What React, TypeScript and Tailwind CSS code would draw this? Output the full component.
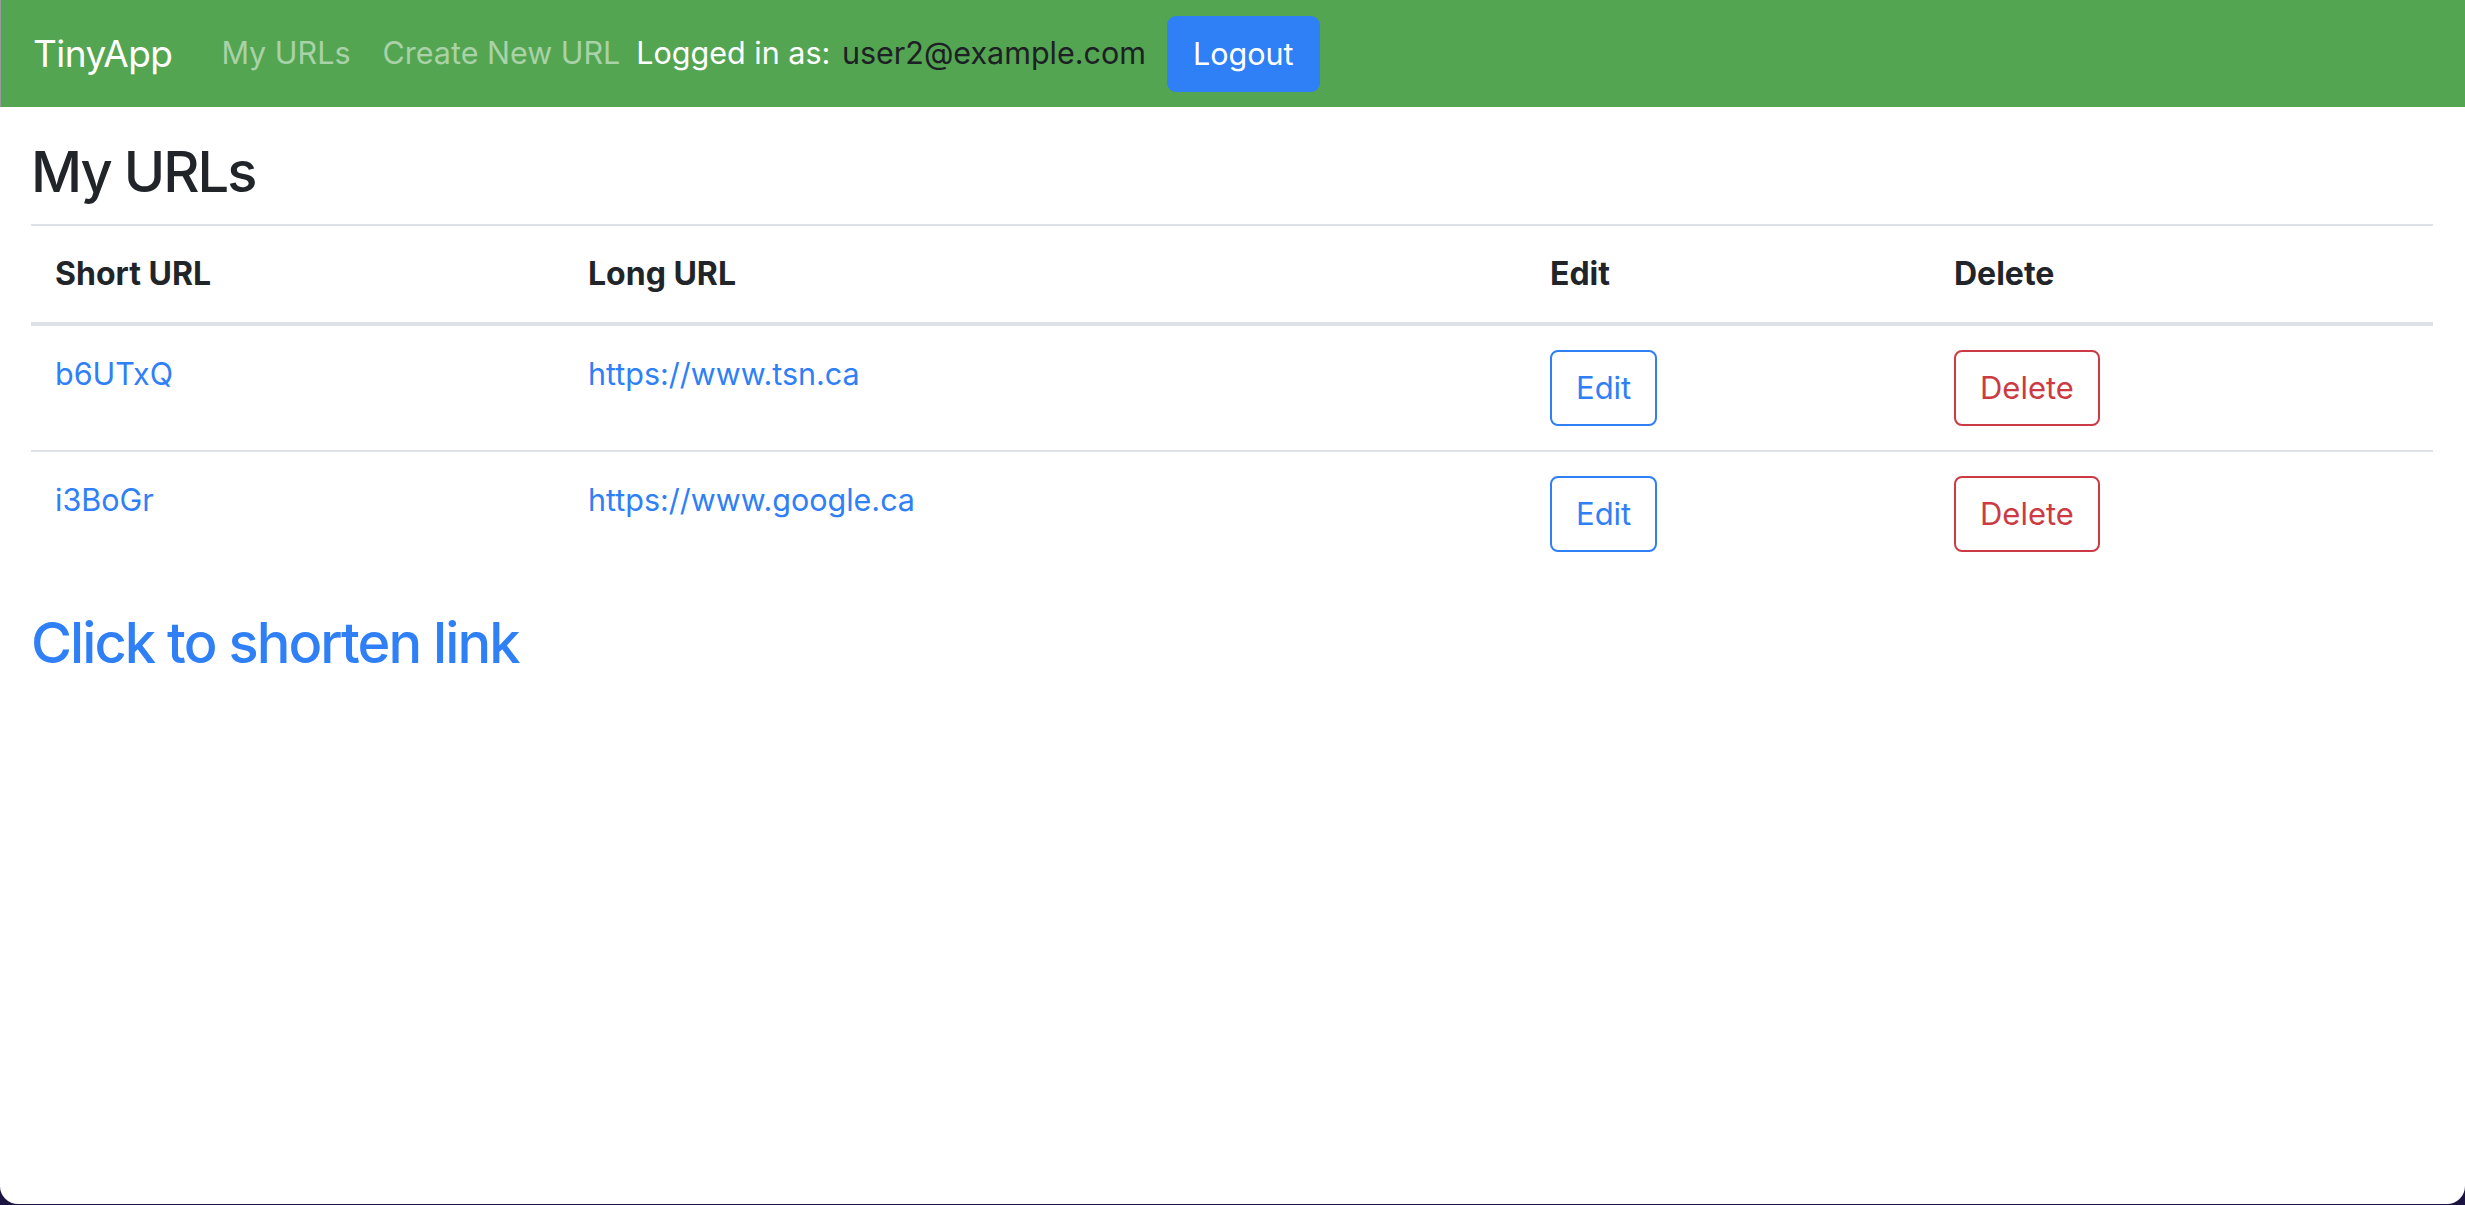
const urls = [
  { short: 'b6UTxQ', long: 'https://www.tsn.ca' },
  { short: 'i3BoGr', long: 'https://www.google.ca' },
];

function Navbar() {
  return (
    <nav className="flex h-[107px] items-center bg-[#53a551] px-8 border-l border-[#9a9a9a]">
      <span className="mr-[33px] text-[37px] leading-none text-white tracking-[-0.015em]">TinyApp</span>
      <a className="px-4 text-[30.5px] leading-none text-white/50">My URLs</a>
      <a className="px-4 text-[30.5px] leading-none text-white/50">Create New URL</a>
      <span className="text-[30.5px] leading-none text-white">Logged in as:&nbsp;</span>
      <span className="ml-[3px] text-[30.5px] leading-none text-[#1d2024]">user2@example.com</span>
      <button className="ml-[21px] h-[76px] rounded-[9px] bg-[#2f7ff7] px-[26px] text-[30.5px] text-white">
        Logout
      </button>
    </nav>
  );
}

function UrlTable() {
  return (
    <table className="w-full border-collapse text-left text-[30.5px] leading-[48px]">
      <thead>
        <tr className="text-[32px] text-[#212529]">
          <th className="w-[533px] border-t-2 border-b-4 border-[#dee2e6] p-6 font-bold">Short URL</th>
          <th className="w-[962px] border-t-2 border-b-4 border-[#dee2e6] p-6 font-bold">Long URL</th>
          <th className="w-[404px] border-t-2 border-b-4 border-[#dee2e6] p-6 font-bold">Edit</th>
          <th className="border-t-2 border-b-4 border-[#dee2e6] p-6 font-bold">Delete</th>
        </tr>
      </thead>
      <tbody>
        {urls.map((u, i) => (
          <tr key={u.short}>
            <td className={`align-top p-6 text-[#2f7ff7] ${i > 0 ? 'border-t-2 border-[#dee2e6]' : ''}`}>
              {u.short}
            </td>
            <td className={`align-top p-6 text-[#2f7ff7] ${i > 0 ? 'border-t-2 border-[#dee2e6]' : ''}`}>
              {u.long}
            </td>
            <td className={`align-top p-6 ${i > 0 ? 'border-t-2 border-[#dee2e6]' : ''}`}>
              <button className="h-[76px] rounded-[8px] border-2 border-[#2f7ff7] px-[24px] text-[31px] text-[#2f7ff7]">
                Edit
              </button>
            </td>
            <td className={`align-top p-6 ${i > 0 ? 'border-t-2 border-[#dee2e6]' : ''}`}>
              <button className="h-[76px] rounded-[8px] border-2 border-[#cc3b44] px-[24px] text-[31px] text-[#cc3b44]">
                Delete
              </button>
            </td>
          </tr>
        ))}
      </tbody>
    </table>
  );
}

export default function App() {
  return (
    <div className="h-[1205px] bg-[#1b1340] font-['Inter',sans-serif]">
      <div className="flex h-[1204px] flex-col overflow-hidden rounded-b-[18px] bg-white">
        <Navbar />
        <main className="pl-[31px] pr-8">
          <h2 className="mt-[27px] mb-[13px] text-[56px] leading-[77px] font-medium tracking-[-0.035em] text-[#212529]">
            My URLs
          </h2>
          <UrlTable />
          <h2 className="mt-[29px] text-[56px] leading-[77px] font-medium tracking-[-0.035em] text-[#2f7ff7]">
            <a>Click to shorten link</a>
          </h2>
        </main>
      </div>
    </div>
  );
}
